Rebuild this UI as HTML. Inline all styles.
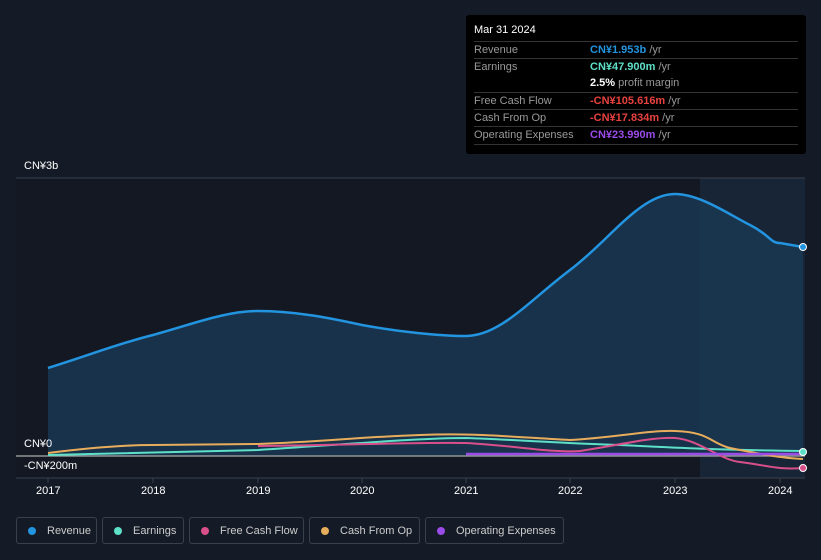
<!DOCTYPE html><html><head><style>
body{margin:0;width:821px;height:560px;background:#151b26;font-family:"Liberation Sans",sans-serif;overflow:hidden;position:relative}
.tt{position:absolute;left:466px;top:15px;width:340px;height:139px;background:#000;border-radius:3px}
.tt .h{position:absolute;left:8px;top:9px;color:#fff;font-size:11px}
.row{position:absolute;left:8px;width:324px;border-top:1px solid #333;font-size:11px;height:17px;line-height:17px;color:#999}
.row span{position:absolute;left:116px}
.leg{position:absolute;top:517px;height:27px;border:1px solid #3a404c;border-radius:3px;color:#ccc;font-size:11px;line-height:27px;box-sizing:border-box;padding-left:30px}
.leg i{position:absolute;left:11px;top:9px;width:8px;height:8px;border-radius:50%}
.ax{position:absolute;color:#fff;font-size:11px}
</style></head><body>
<svg width="821" height="560" style="position:absolute;left:0;top:0">
<rect x="16" y="178" width="789" height="300" fill="#131823"/>
<rect x="700" y="178" width="105" height="300" fill="#172536"/>
<line x1="16" y1="178" x2="805" y2="178" stroke="#3a404c"/>
<line x1="16" y1="478" x2="805" y2="478" stroke="#3a404c"/>
<path d="M48,368 C90,355 120,343 153,335 C190,325 225,311 258,311 C295,311 330,318 362,325 C400,332 440,336 466,336 C500,336 530,300 570,270 C610,240 640,194 675,194 C700,194 730,215 750,225 C770,235 770,243 780,243 L803,247 L803,456 L48,456 Z" fill="#1a3a55" opacity=".8"/>
<path d="M48,368 C90,355 120,343 153,335 C190,325 225,311 258,311 C295,311 330,318 362,325 C400,332 440,336 466,336 C500,336 530,300 570,270 C610,240 640,194 675,194 C700,194 730,215 750,225 C770,235 770,243 780,243 L803,247" fill="none" stroke="#2394df" stroke-width="2.5"/>
<line x1="16" y1="456" x2="805" y2="456" stroke="#aaa" stroke-width="1.2"/>
<path d="M48,455 L258,450 C350,444 420,438 466,438 C520,440 560,443 620,445 C680,448 720,450 803,451" fill="none" stroke="#5ee0c8" stroke-width="2"/>
<path d="M258,446 C350,445 420,442 466,443 C520,446 550,453 580,451 C620,445 650,437 675,438 C700,440 720,460 740,462 C770,466 780,470 803,468" fill="none" stroke="#d94f8a" stroke-width="2"/>
<path d="M48,453 C80,449 120,445 153,445 L258,444 C320,442 360,437 420,435 C470,433 500,436 570,440 C610,438 650,430 675,431 C710,432 710,443 730,448 C760,454 780,458 803,459" fill="none" stroke="#e8ad5c" stroke-width="2"/>
<line x1="466" y1="454" x2="803" y2="454" stroke="#9b4be8" stroke-width="2.5"/>
<circle cx="803" cy="247" r="3.5" fill="#2394df" stroke="#fff"/>
<circle cx="803" cy="452" r="3.5" fill="#5ee0c8" stroke="#fff"/>
<circle cx="803" cy="468" r="3.5" fill="#d94f8a" stroke="#fff"/>
<g stroke="#3a404c"><line x1="48" y1="478" x2="48" y2="483"/><line x1="153" y1="478" x2="153" y2="483"/><line x1="258" y1="478" x2="258" y2="483"/><line x1="362" y1="478" x2="362" y2="483"/><line x1="466" y1="478" x2="466" y2="483"/><line x1="570" y1="478" x2="570" y2="483"/><line x1="675" y1="478" x2="675" y2="483"/><line x1="780" y1="478" x2="780" y2="483"/></g>
</svg>
<div class="ax" style="left:24px;top:160px">CN¥3b</div>
<div class="ax" style="left:24px;top:438px">CN¥0</div>
<div class="ax" style="left:24px;top:460px">-CN¥200m</div>
<div class="ax" style="left:36px;top:485px">2017</div><div class="ax" style="left:141px;top:485px">2018</div><div class="ax" style="left:246px;top:485px">2019</div><div class="ax" style="left:350px;top:485px">2020</div><div class="ax" style="left:454px;top:485px">2021</div><div class="ax" style="left:558px;top:485px">2022</div><div class="ax" style="left:663px;top:485px">2023</div><div class="ax" style="left:768px;top:485px">2024</div>
<div class="tt"><div class="h">Mar 31 2024</div>
<div class="row" style="top:26px">Revenue<span style="color:#2394df;font-weight:bold">CN¥1.953b <b style="color:#999;font-weight:normal">/yr</b></span></div>
<div class="row" style="top:43px">Earnings<span style="color:#5ee0c8;font-weight:bold">CN¥47.900m <b style="color:#999;font-weight:normal">/yr</b></span></div>
<div class="row" style="top:60px;border:0"><span style="color:#fff;font-weight:bold">2.5% <b style="color:#999;font-weight:normal">profit margin</b></span></div>
<div class="row" style="top:77px">Free Cash Flow<span style="color:#e8423f;font-weight:bold">-CN¥105.616m <b style="color:#999;font-weight:normal">/yr</b></span></div>
<div class="row" style="top:94px">Cash From Op<span style="color:#e8423f;font-weight:bold">-CN¥17.834m <b style="color:#999;font-weight:normal">/yr</b></span></div>
<div class="row" style="top:111px">Operating Expenses<span style="color:#9b4be8;font-weight:bold">CN¥23.990m <b style="color:#999;font-weight:normal">/yr</b></span></div>
<div class="row" style="top:129px;height:0"></div>
</div>
<div class="leg" style="left:16px;width:81px"><i style="background:#2394df"></i>Revenue</div>
<div class="leg" style="left:102px;width:82px"><i style="background:#5ee0c8"></i>Earnings</div>
<div class="leg" style="left:189px;width:115px"><i style="background:#d94f8a"></i>Free Cash Flow</div>
<div class="leg" style="left:309px;width:111px"><i style="background:#e8ad5c"></i>Cash From Op</div>
<div class="leg" style="left:425px;width:139px"><i style="background:#9b4be8"></i>Operating Expenses</div>
</body></html>
